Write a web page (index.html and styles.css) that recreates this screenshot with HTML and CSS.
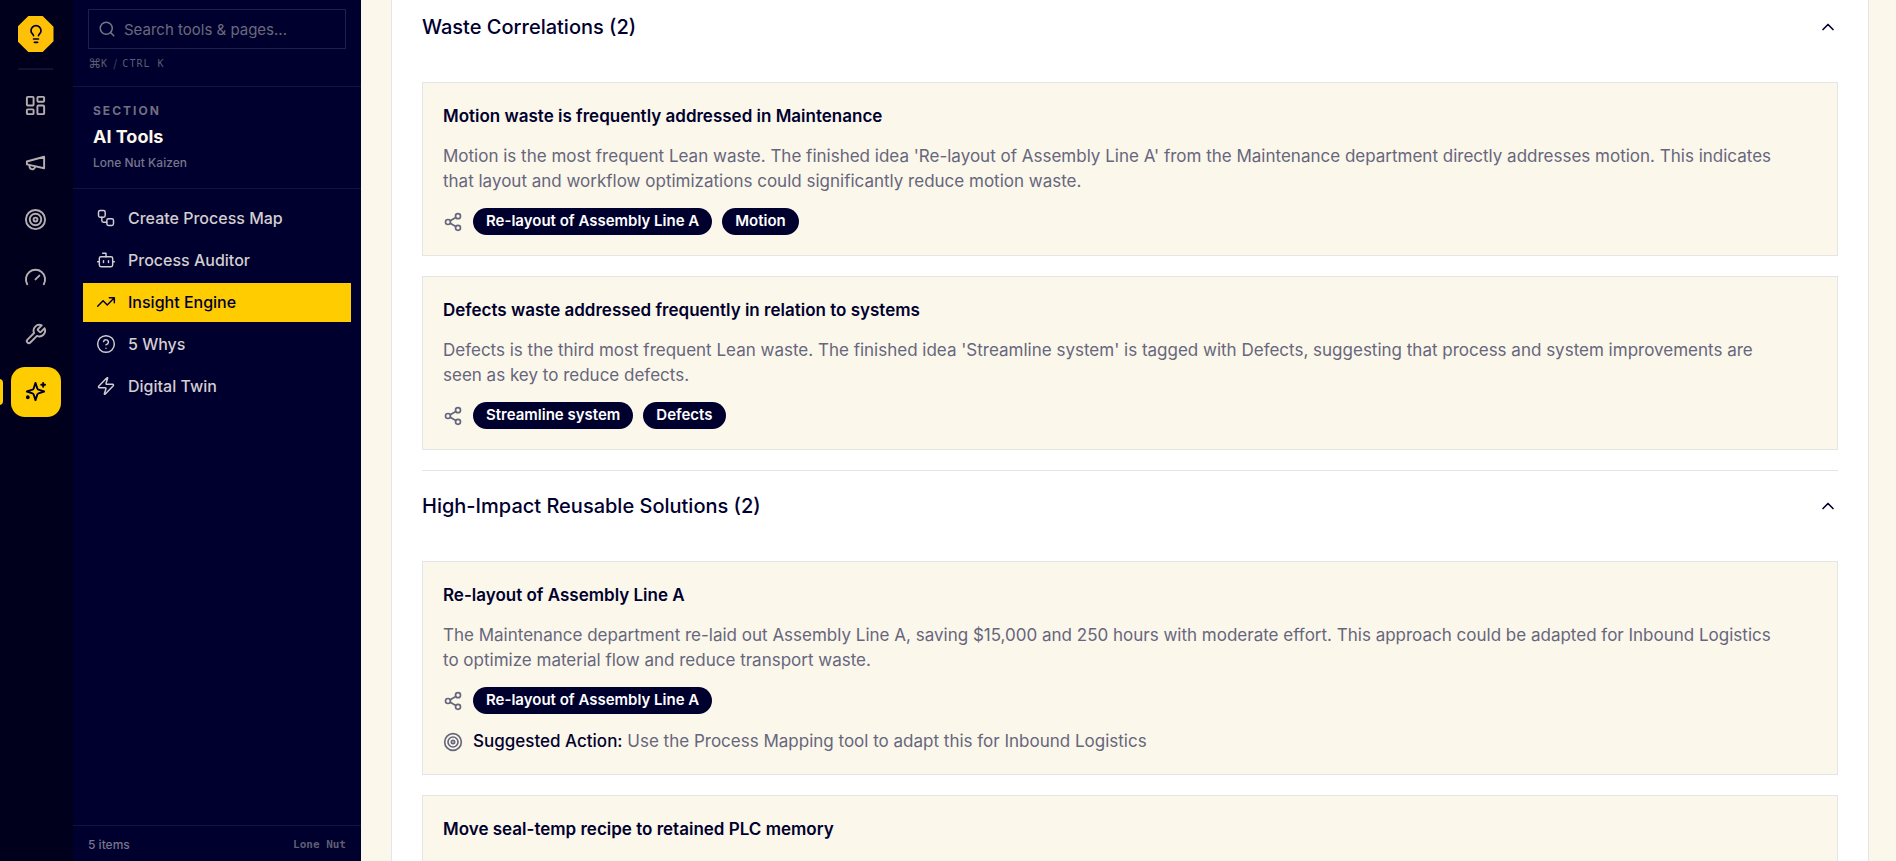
FILE: index.html
```html
<!DOCTYPE html>
<html lang="en">
<head>
<meta charset="utf-8">
<title>Insight Engine</title>
<link rel="stylesheet" href="styles.css">
</head>
<body>
<svg class="sprite" aria-hidden="true">
  <symbol id="share" viewBox="0 0 24 24"><circle cx="18" cy="5" r="3"/><circle cx="6" cy="12" r="3"/><circle cx="18" cy="19" r="3"/><path d="M8.59 13.51l6.83 3.98M15.41 6.51l-6.82 3.98"/></symbol>
  <symbol id="target" viewBox="0 0 24 24"><circle cx="12" cy="12" r="10"/><circle cx="12" cy="12" r="6"/><circle cx="12" cy="12" r="2"/></symbol>
  <symbol id="chevron" viewBox="0 0 24 24"><path d="m18 15-6-6-6 6"/></symbol>
</svg>
<div class="app">
  <aside class="rail">
    <a class="logo" href="#" aria-label="Home">
      <svg class="icon icon-logo" viewBox="0 0 24 24"><path d="M15 14c.2-1 .7-1.700 1.500-2.500 1-.9 1.500-2.200 1.500-3.500A6 6 0 0 0 6 8c0 1 .2 2.200 1.500 3.500.7.7 1.300 1.500 1.500 2.500M9 18h6M10 22h4"/></svg>
    </a>
    <span class="rail-rule"></span>
    <nav class="rail-nav" aria-label="Areas">
      <button class="rail-btn" aria-label="Dashboard"><svg class="icon icon-rail" viewBox="0 0 24 24"><rect x="3" y="3" width="7" height="9" rx="1"/><rect x="14" y="3" width="7" height="5" rx="1"/><rect x="14" y="12" width="7" height="9" rx="1"/><rect x="3" y="16" width="7" height="5" rx="1"/></svg></button>
      <button class="rail-btn" aria-label="Announcements"><svg class="icon icon-rail" viewBox="0 0 24 24"><path d="m3 11 18-5v12L3 14v-3zM11.600 16.800a3 3 0 1 1-5.800-1.600"/></svg></button>
      <button class="rail-btn" aria-label="Goals"><svg class="icon icon-rail"><use href="#target"/></svg></button>
      <button class="rail-btn" aria-label="Performance"><svg class="icon icon-rail" viewBox="0 0 24 24"><path d="m12 14 4-4M3.340 19a10 10 0 1 1 17.320 0"/></svg></button>
      <button class="rail-btn" aria-label="Tools"><svg class="icon icon-rail" viewBox="0 0 24 24"><path d="M14.700 6.300a1 1 0 0 0 0 1.400l1.600 1.600a1 1 0 0 0 1.400 0l3.770-3.770a6 6 0 0 1-7.940 7.940l-6.910 6.910a2.120 2.120 0 0 1-3-3l6.910-6.910a6 6 0 0 1 7.940-7.940l-3.760 3.760z"/></svg></button>
      <button class="rail-btn is-active" aria-label="AI Tools"><svg class="icon icon-rail" viewBox="0 0 24 24"><path d="m12 3-1.912 5.813a2 2 0 0 1-1.275 1.275L3 12l5.813 1.912a2 2 0 0 1 1.275 1.275L12 21l1.912-5.813a2 2 0 0 1 1.275-1.275L21 12l-5.813-1.912a2 2 0 0 1-1.275-1.275L12 3ZM20 3v4M22 5h-4"/><circle cx="4" cy="18" r="1"/></svg></button>
    </nav>
  </aside>

  <aside class="sidebar">
    <div class="search">
      <label class="search-box">
        <svg class="icon icon-search" viewBox="0 0 24 24"><circle cx="11" cy="11" r="8"/><path d="m21 21-4.300-4.300"/></svg>
        <input class="search-input" type="text" placeholder="Search tools &amp; pages..." aria-label="Search tools and pages">
      </label>
      <p class="shortcut"><kbd class="key"><span class="cmd">⌘</span>K</kbd><span class="slash">/</span><kbd class="key">CTRL K</kbd></p>
    </div>
    <header class="section-head">
      <p class="eyebrow">SECTION</p>
      <h2 class="section-title">AI Tools</h2>
      <p class="section-org">Lone Nut Kaizen</p>
    </header>
    <nav class="menu" aria-label="AI Tools">
      <a class="menu-item" href="#"><svg class="icon icon-menu" viewBox="0 0 24 24"><rect x="3" y="3" width="8" height="8" rx="2"/><path d="M7 11v4a2 2 0 0 0 2 2h4"/><rect x="13" y="13" width="8" height="8" rx="2"/></svg>Create Process Map</a>
      <a class="menu-item" href="#"><svg class="icon icon-menu" viewBox="0 0 24 24"><path d="M12 8V4H8"/><rect x="4" y="8" width="16" height="12" rx="2"/><path d="M2 14h2M20 14h2M15 13v2M9 13v2"/></svg>Process Auditor</a>
      <a class="menu-item is-current" href="#" aria-current="page"><svg class="icon icon-menu" viewBox="0 0 24 24"><path d="m22 7-8.500 8.500-5-5L2 17M16 7h6v6"/></svg>Insight Engine</a>
      <a class="menu-item" href="#"><svg class="icon icon-menu" viewBox="0 0 24 24"><circle cx="12" cy="12" r="10"/><path d="M9.090 9a3 3 0 0 1 5.830 1c0 2-3 3-3 3M12 17h.01"/></svg>5 Whys</a>
      <a class="menu-item" href="#"><svg class="icon icon-menu" viewBox="0 0 24 24"><path d="M4 14a1 1 0 0 1-.78-1.630l9.900-10.200a.5.5 0 0 1 .86.460l-1.920 6.020A1 1 0 0 0 13 10h7a1 1 0 0 1 .78 1.630l-9.900 10.200a.5.5 0 0 1-.86-.460l1.920-6.020A1 1 0 0 0 11 14z"/></svg>Digital Twin</a>
    </nav>
    <footer class="sidebar-foot"><span>5 items</span><span class="brand">Lone Nut</span></footer>
  </aside>

  <main class="main">
    <div class="report">
      <section class="group">
        <h3 class="group-head"><button class="group-toggle" aria-expanded="true">Waste Correlations (2)<svg class="icon icon-chevron"><use href="#chevron"/></svg></button></h3>
        <div class="cards">
          <article class="card">
            <h4 class="card-title">Motion waste is frequently addressed in Maintenance</h4>
            <p class="card-text">Motion is the most frequent Lean waste. The finished idea 'Re-layout of Assembly Line A' from the Maintenance department directly addresses motion. This indicates that layout and workflow optimizations could significantly reduce motion waste.</p>
            <div class="tags"><svg class="icon icon-card"><use href="#share"/></svg><span class="tag">Re-layout of Assembly Line A</span><span class="tag">Motion</span></div>
          </article>
          <article class="card">
            <h4 class="card-title">Defects waste addressed frequently in relation to systems</h4>
            <p class="card-text">Defects is the third most frequent Lean waste. The finished idea 'Streamline system' is tagged with Defects, suggesting that process and system improvements are seen as key to reduce defects.</p>
            <div class="tags"><svg class="icon icon-card"><use href="#share"/></svg><span class="tag">Streamline system</span><span class="tag">Defects</span></div>
          </article>
        </div>
      </section>
      <section class="group">
        <h3 class="group-head"><button class="group-toggle" aria-expanded="true">High-Impact Reusable Solutions (2)<svg class="icon icon-chevron"><use href="#chevron"/></svg></button></h3>
        <div class="cards">
          <article class="card">
            <h4 class="card-title">Re-layout of Assembly Line A</h4>
            <p class="card-text">The Maintenance department re-laid out Assembly Line A, saving $15,000 and 250 hours with moderate effort. This approach could be adapted for Inbound Logistics to optimize material flow and reduce transport waste.</p>
            <div class="tags"><svg class="icon icon-card"><use href="#share"/></svg><span class="tag">Re-layout of Assembly Line A</span></div>
            <p class="action"><svg class="icon icon-card"><use href="#target"/></svg><span><strong class="action-label">Suggested Action:</strong> Use the Process Mapping tool to adapt this for Inbound Logistics</span></p>
          </article>
          <article class="card">
            <h4 class="card-title">Move seal-temp recipe to retained PLC memory</h4>
            <p class="card-text"></p>
          </article>
        </div>
      </section>
    </div>
  </main>
</div>
</body>
</html>
```
FILE: styles.css
```css
:root {
  --ink: #00002e;
  --rail: #00001c;
  --gold: #ffcc00;
  --cream: #fbf7ea;
  --line: #e5e5e5;
  --muted: #66667d;
  --side-line: #14143a;
  --side-text: #d3ced0;
}

* { box-sizing: border-box; margin: 0; }

body {
  font-family: Inter, "Liberation Sans", sans-serif;
  color: var(--ink);
  background: var(--cream);
}

button, input { font: inherit; color: inherit; }
a { color: inherit; text-decoration: none; }

.sprite { position: absolute; width: 0; height: 0; }

.icon {
  flex: none;
  fill: none;
  stroke: currentColor;
  stroke-width: 2;
  stroke-linecap: round;
  stroke-linejoin: round;
}

.app { display: flex; height: 100vh; overflow: hidden; }

/* Icon rail */
.rail {
  flex: none;
  width: 73px;
  padding: 16px 2px 16px 0;
  display: flex;
  flex-direction: column;
  align-items: center;
  background: var(--rail);
}
.logo {
  width: 36px;
  height: 36px;
  display: grid;
  place-items: center;
  color: var(--ink);
  background: #ffc107;
  clip-path: polygon(30% 0, 70% 0, 100% 30%, 100% 70%, 70% 100%, 30% 100%, 0 70%, 0 30%);
}
.icon-logo { width: 20px; height: 20px; }
.rail-rule { width: 35px; height: 2px; margin: 16px 0 10px; background: #111136; }
.rail-nav {
  width: 100%;
  height: 337px;
  display: flex;
  flex-direction: column;
  align-items: center;
  justify-content: space-between;
}
.rail-btn {
  position: relative;
  width: 50px;
  height: 50px;
  padding: 0;
  display: grid;
  place-items: center;
  color: #b5aeb0;
  background: none;
  border: 0;
  border-radius: 14px;
}
.rail-btn.is-active { color: var(--ink); background: var(--gold); }
.rail-btn.is-active::before {
  content: "";
  position: absolute;
  left: -12px;
  top: 12px;
  width: 4px;
  height: 26px;
  border-radius: 0 4px 4px 0;
  background: var(--gold);
}
.icon-rail { width: 23px; height: 23px; }

/* Section sidebar */
.sidebar {
  flex: none;
  width: 288px;
  display: flex;
  flex-direction: column;
  color: var(--side-text);
  background: var(--ink);
}
.search { padding: 9px 15px 15px; border-bottom: 1px solid var(--side-line); }
.search-box {
  height: 40px;
  padding: 0 9px;
  display: flex;
  align-items: center;
  gap: 8px;
  color: #77758a;
  border: 1px solid #20204a;
}
.icon-search { width: 18px; height: 18px; }
.search-input {
  flex: 1;
  min-width: 0;
  padding: 0;
  font-size: 15px;
  background: none;
  border: 0;
  outline: 0;
}
.search-input::placeholder { color: #6b697c; opacity: 1; }
.shortcut {
  height: 15px;
  margin-top: 7px;
  display: flex;
  align-items: center;
  gap: 5px;
  color: #5d5b70;
}
.key { display: flex; align-items: center; font: 10px/15px "DejaVu Sans Mono", monospace; letter-spacing: 1px; }
.cmd { font-family: "DejaVu Sans", sans-serif; font-size: 13px; letter-spacing: 0; }
.slash { font-size: 12px; color: #3a3955; }

.section-head { padding: 15px 20px 16px; border-bottom: 1px solid var(--side-line); }
.eyebrow { font-size: 12px; line-height: 18px; font-weight: 700; letter-spacing: 2px; color: #716f80; }
.section-title { margin-top: 4px; font-size: 18px; line-height: 25px; font-weight: 700; color: var(--cream); }
.section-org { margin-top: 5px; font-size: 12px; line-height: 18px; font-weight: 500; color: #77758a; }

.menu { flex: 1; padding: 10px; display: flex; flex-direction: column; gap: 3px; }
.menu-item {
  height: 39px;
  padding: 0 13px 1px;
  display: flex;
  align-items: center;
  gap: 12px;
  font-size: 16px;
  font-weight: 500;
}
.menu-item.is-current { color: var(--ink); background: var(--gold); }
.icon-menu { width: 20px; height: 20px; stroke-width: 1.75; }

.sidebar-foot {
  height: 36px;
  padding: 2px 15px 0;
  display: flex;
  align-items: center;
  justify-content: space-between;
  font-size: 12px;
  font-weight: 500;
  color: #77758a;
  border-top: 1px solid var(--side-line);
}
.brand { font: 700 11px "DejaVu Sans Mono", monospace; color: #5e5c70; }

/* Report, scrolled part-way down */
.main { flex: 1; min-width: 0; padding: 0 27px 0 30px; overflow: hidden; }
.report {
  margin-top: -8px;
  padding: 0 30px;
  background: #fff;
  border: solid var(--line);
  border-width: 0 1px;
}
.group + .group { border-top: 1px solid var(--line); }
.group-head { font-size: 20px; line-height: 30px; font-weight: 500; }
.group-toggle {
  width: 100%;
  padding: 20px 0;
  display: flex;
  align-items: center;
  justify-content: space-between;
  text-align: left;
  background: none;
  border: 0;
}
.icon-chevron { width: 20px; height: 20px; }
.cards { padding: 20px 0; display: flex; flex-direction: column; gap: 20px; }
.card {
  padding: 21px 20px 20px;
  display: flex;
  flex-direction: column;
  gap: 15px;
  background: var(--cream);
  border: 1px solid var(--line);
}
.card-title { font-size: 17px; line-height: 25px; font-weight: 600; }
.card-text {
  min-height: 49px;
  margin-bottom: -1px;
  padding-right: 32px;
  font-size: 17px;
  line-height: 25px;
  color: var(--muted);
}
.tags { display: flex; align-items: center; gap: 10px; color: var(--muted); }
.tag {
  height: 27px;
  padding: 0 13px;
  font-size: 15px;
  line-height: 26px;
  font-weight: 600;
  color: #fff;
  background: var(--ink);
  border-radius: 14px;
}
.action { display: flex; align-items: center; gap: 10px; font-size: 17px; line-height: 25px; color: var(--muted); }
.action-label { font-weight: 500; color: var(--ink); }
.icon-card { width: 20px; height: 20px; }
```
